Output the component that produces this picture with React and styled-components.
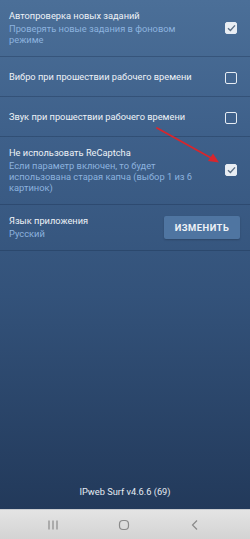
import styled, { createGlobalStyle } from "styled-components";

const GlobalStyle = createGlobalStyle`
  html, body {
    margin: 0;
    padding: 0;
    width: 250px;
    height: 539px;
    overflow: hidden;
  }
  body {
    font-family: Roboto, "Noto Sans", sans-serif;
  }
`;

const Screen = styled.div`
  position: relative;
  width: 250px;
  height: 539px;
  display: flex;
  flex-direction: column;
  background: linear-gradient(180deg, #4b6f98 0%, #3e608a 25%, #33527a 55%, #22395a 95%);
`;

const List = styled.div`
  display: flex;
  flex-direction: column;
`;

const Row = styled.div`
  display: flex;
  align-items: center;
  padding: ${(p) => (p.single ? "14px" : "10px")} 13px ${(p) => (p.single ? "12px" : "11px")} 9px;
  border-bottom: 1px solid rgba(20, 40, 70, 0.3);
`;

const Texts = styled.div`
  flex: 1;
  min-width: 0;
  display: flex;
  flex-direction: column;
`;

const Title = styled.div`
  color: #eef2f7;
  font-size: 9.25px;
  line-height: 12px;
  margin-bottom: 1px;
  white-space: nowrap;
`;

const Subtitle = styled.div`
  color: #8db3df;
  font-size: 9.3px;
  line-height: 11px;
`;

const Box = styled.div`
  flex-shrink: 0;
  width: 10px;
  height: 10px;
  margin-left: 16px;
  border: 1.5px solid #e6ecf3;
  border-radius: 2px;
  background: ${(p) => (p.checked ? "#e9eef4" : "transparent")};
  display: flex;
  align-items: center;
  justify-content: center;
`;

const Button = styled.div`
  flex-shrink: 0;
  width: 76px;
  height: 23px;
  margin-right: -3px;
  border-radius: 2px;
  background: #4f75a1;
  color: #eef2f7;
  font-size: 9.4px;
  font-weight: 700;
  letter-spacing: 0.5px;
  display: flex;
  align-items: center;
  justify-content: center;
  box-shadow: 0 1px 2px rgba(0, 0, 0, 0.2);
`;

const Footer = styled.div`
  margin-top: auto;
  padding-bottom: 12px;
  text-align: center;
  color: #e6ebf2;
  font-size: 9.25px;
`;

const NavBar = styled.div`
  height: 29px;
  display: flex;
  align-items: center;
  justify-content: space-between;
  padding: 0 49px 0 47px;
  background: linear-gradient(180deg, #e4e4e4 0%, #d3d3d3 100%);
  border-top: 1px solid #c9ccd0;
`;

const Arrow = styled.svg`
  position: absolute;
  left: 0;
  top: 0;
  pointer-events: none;
`;

const Check = () => (
  <svg width="9" height="8" viewBox="0 0 9 8">
    <path d="M1 4.2 L3.4 6.4 L8 1.4" fill="none" stroke="#5c6f86" strokeWidth="1.4" />
  </svg>
);

const Checkbox = ({ checked }) => <Box checked={checked}>{checked && <Check />}</Box>;

const App = () => {
  return (
    <>
      <GlobalStyle />
      <Screen>
        <List>
          <Row>
            <Texts>
              <Title>Автопроверка новых заданий</Title>
              <Subtitle>Проверять новые задания в фоновом режиме</Subtitle>
            </Texts>
            <Checkbox checked />
          </Row>
          <Row single>
            <Texts>
              <Title>Вибро при прошествии рабочего времени</Title>
            </Texts>
            <Checkbox />
          </Row>
          <Row single>
            <Texts>
              <Title>Звук при прошествии рабочего времени</Title>
            </Texts>
            <Checkbox />
          </Row>
          <Row>
            <Texts>
              <Title>Не использовать ReCaptcha</Title>
              <Subtitle>
                Если параметр включен, то будет использована старая капча (выбор 1 из 6 картинок)
              </Subtitle>
            </Texts>
            <Checkbox checked />
          </Row>
          <Row>
            <Texts>
              <Title>Язык приложения</Title>
              <Subtitle>Русский</Subtitle>
            </Texts>
            <Button>ИЗМЕНИТЬ</Button>
          </Row>
        </List>
        <Footer>IPweb Surf v4.6.6 (69)</Footer>
        <NavBar>
          <svg width="12" height="12" viewBox="0 0 12 12">
            <path d="M2 1.5 V10.5 M6 1.5 V10.5 M10 1.5 V10.5" stroke="#8a8a8a" strokeWidth="1.2" />
          </svg>
          <svg width="12" height="12" viewBox="0 0 12 12">
            <rect x="1.5" y="1.5" width="9" height="9" rx="3.5" fill="none" stroke="#8a8a8a" strokeWidth="1.2" />
          </svg>
          <svg width="12" height="12" viewBox="0 0 12 12">
            <path d="M8 1.5 L3.5 6 L8 10.5" fill="none" stroke="#8a8a8a" strokeWidth="1.2" />
          </svg>
        </NavBar>
        <Arrow width="250" height="539" viewBox="0 0 250 539">
          <path d="M157 128 L213 159" stroke="#d8262c" strokeWidth="1.8" strokeLinecap="round" />
          <path d="M219 162.5 L208 161 L213 153.5 Z" fill="#d8262c" />
        </Arrow>
      </Screen>
    </>
  );
};

export default App;
